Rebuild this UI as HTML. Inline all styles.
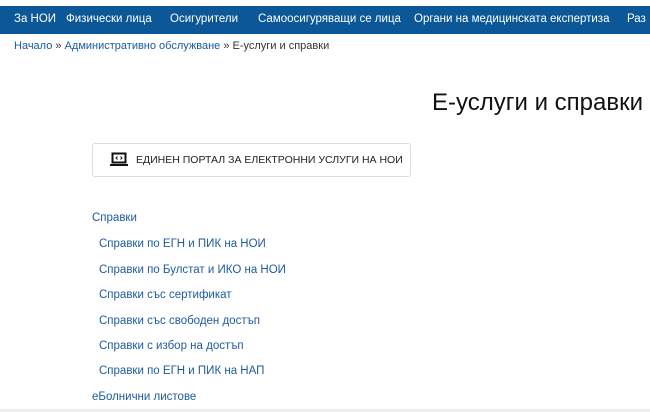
<!DOCTYPE html>
<html><head><meta charset="utf-8"><style>
body{margin:0;width:650px;height:412px;overflow:hidden;background:#fff;font-family:"Liberation Sans","DejaVu Sans",sans-serif;position:relative}
.nav{position:absolute;top:6px;left:0;width:650px;height:28px;background:#0b5797;color:#fff;font-size:11.5px;white-space:nowrap;overflow:hidden}
.nav span{position:absolute;top:7px}
.bc{position:absolute;top:40px;left:14px;font-size:11px;color:#333;white-space:nowrap}
.bc a{color:#1a5aa0}
h1{position:absolute;top:89px;left:432px;margin:0;font-weight:normal;font-size:24px;color:#111;white-space:nowrap}
.btn{position:absolute;top:143px;left:92px;width:317px;height:32px;border:1px solid #ddd;border-radius:3px;font-size:10.5px;color:#222}
.btn span{position:absolute;left:43px;top:10px;white-space:nowrap}
.l{position:absolute;font-size:11.5px;color:#1e5a9c;white-space:nowrap}
.line{position:absolute;left:0;top:409px;width:650px;height:3px;background:#eee}
</style></head><body>
<div class="nav"><span style="left:14px">За НОИ</span><span style="left:66px">Физически лица</span><span style="left:170px">Осигурители</span><span style="left:258px">Самоосигуряващи се лица</span><span style="left:414px">Органи на медицинската експертиза</span><span style="left:627px">Раз</span></div>
<div class="bc"><a>Начало</a> » <a>Административно обслужване</a> » Е-услуги и справки</div>
<h1>Е-услуги и справки</h1>
<div class="btn"><svg style="position:absolute;left:17px;top:8px" width="18" height="15" viewBox="0 0 18 15"><rect x="2.5" y="1.5" width="13" height="9" fill="none" stroke="#111" stroke-width="2"/><rect x="0" y="12" width="18" height="2" fill="#111"/><path d="M7.5 4.5L6 6l1.5 1.5M10.5 4.5L12 6l-1.5 1.5" stroke="#111" fill="none"/></svg><span>ЕДИНЕН ПОРТАЛ ЗА ЕЛЕКТРОННИ УСЛУГИ НА НОИ</span></div>
<div class="l" style="left:92px;top:212px">Справки</div>
<div class="l" style="left:99px;top:238px">Справки по ЕГН и ПИК на НОИ</div>
<div class="l" style="left:99px;top:264px">Справки по Булстат и ИКО на НОИ</div>
<div class="l" style="left:99px;top:289px">Справки със сертификат</div>
<div class="l" style="left:99px;top:315px">Справки със свободен достъп</div>
<div class="l" style="left:99px;top:340px">Справки с избор на достъп</div>
<div class="l" style="left:99px;top:365px">Справки по ЕГН и ПИК на НАП</div>
<div class="l" style="left:92px;top:391px">еБолнични листове</div>
<div class="line"></div>
</body></html>
